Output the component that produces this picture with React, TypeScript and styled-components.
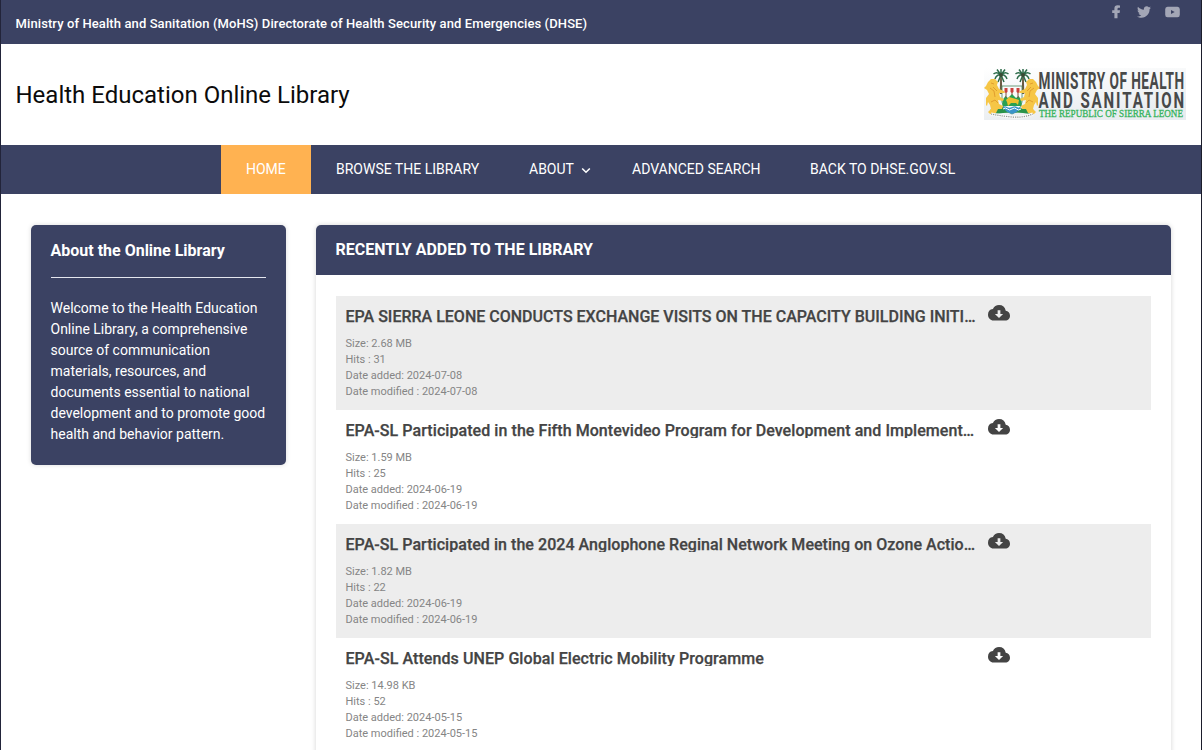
import React from "react";
import styled, { createGlobalStyle } from "styled-components";

const navy = "#3b4263";

const GlobalStyle = createGlobalStyle`
  * { box-sizing: border-box; }
  body { margin: 0; background: #fff; font-family: Roboto, "Liberation Sans", sans-serif; overflow: hidden; }
  h1, h2, h3, p, ul { margin: 0; padding: 0; }
`;

const Page = styled.div`
  height: 750px;
  overflow: hidden;
  border-left: 1px solid #22243a;
  border-right: 1px solid #1b1d2b;
`;

const TopBar = styled.div`
  height: 44px;
  background: ${navy};
  color: #fff;
  display: flex;
  justify-content: space-between;
  padding: 0 21px 0 14.5px;
`;

const TopText = styled.span`
  font-size: 13px;
  font-weight: 500;
  line-height: 47px;
  letter-spacing: 0.1px;
`;

const Socials = styled.div`
  display: flex;
  gap: 14px;
  padding-top: 5px;
  svg { display: block; fill: #a3a6b6; }
`;

const Header = styled.header`
  height: 101px;
  display: flex;
  align-items: center;
  justify-content: space-between;
  padding: 0 15px 1px 14.5px;
`;

const SiteTitle = styled.h1`
  padding-top: 1px;
  font-size: 24px;
  font-weight: 400;
  line-height: 30px;
  color: #0b0b0b;
`;

const Nav = styled.nav`
  height: 49px;
  padding-right: 2px;
  background: ${navy};
  display: flex;
  justify-content: center;
`;

const NavItem = styled.a<{ $active?: boolean; $width: number }>`
  width: ${(p) => p.$width}px;
  padding-left: 25.5px;
  background: ${(p) => (p.$active ? "#ffb251" : "transparent")};
  color: #fff;
  font-size: 14px;
  line-height: 49px;
  white-space: nowrap;
  display: flex;
  align-items: center;
  gap: 7.5px;
`;

const Columns = styled.main`
  display: flex;
  align-items: flex-start;
  gap: 30px;
  padding: 31px 30px 0;
`;

const About = styled.aside`
  width: 255px;
  height: 240px;
  padding: 0 20px;
  border-radius: 5px;
  background: ${navy};
  color: #fff;
  box-shadow: 0 0 5px rgba(0, 0, 0, 0.14);
`;

const AboutTitle = styled.h2`
  font-size: 16px;
  font-weight: 700;
  line-height: 52px;
  height: 53px;
  text-indent: -0.5px;
  border-bottom: 1px solid #e4e6ee;
`;

const AboutText = styled.p`
  padding-top: 20px;
  font-size: 14px;
  line-height: 21px;
  margin: 0 -6px 0 -0.5px;
`;

const Panel = styled.section`
  flex: 1;
  min-width: 0;
  height: 600px;
  border-radius: 5px;
  background: #fff;
  box-shadow: 0 0 5px rgba(0, 0, 0, 0.17);
`;

const PanelTitle = styled.h2`
  height: 50px;
  padding-left: 19.5px;
  border-radius: 5px 5px 0 0;
  background: ${navy};
  color: #fff;
  font-size: 16px;
  font-weight: 700;
  line-height: 49px;
`;

const Entries = styled.ul`
  padding: 21px 20px 0;
  list-style: none;
`;

const Entry = styled.li`
  height: 114px;
  padding: 9px 9.5px 0;
  background: #fff;
  &:nth-child(odd) { background: #ededed; }
`;

const EntryHead = styled.div`
  display: flex;
  gap: 10px;
  height: 31px;
`;

const EntryTitle = styled.h3<{ $tracking: number }>`
  width: 632px;
  height: 18px;
  margin-top: 1px;
  overflow: hidden;
  text-overflow: ellipsis;
  white-space: nowrap;
  color: #444;
  font-size: 16px;
  font-weight: 500;
  line-height: 21px;
  letter-spacing: ${(p) => p.$tracking}px;
  -webkit-text-stroke: 0.25px #444;
`;

const Meta = styled.p`
  color: #858585;
  font-size: 11px;
  line-height: 16px;
`;

const CloudDownload = () => (
  <svg width="22" height="15.500" viewBox="0 0 24 16" preserveAspectRatio="none" fill="#444">
    <path d="M19.35 6.04A7.49 7.49 0 0 0 12 0C9.11 0 6.6 1.64 5.35 4.04A5.994 5.994 0 0 0 0 10c0 3.31 2.69 6 6 6h13c2.76 0 5-2.24 5-5 0-2.64-2.05-4.78-4.65-4.96zM16.500 9.300l-4.500 4.200-4.500-4.200h3V5.500h3v3.800z" />
  </svg>
);

const Palm = ({ x }: { x: number }) => (
  <g transform={`translate(${x} 0)`}>
    <path d="M-.8 8h1.6l.5 18h-2.6z" fill="#6a5a41" />
    <path
      d="M0 7L0 1M0 7L-4 1.500M0 7L4 1.500M0 7Q-4 3-7.500 6M0 7Q4 3 7.500 6M0 7Q-4 6-6 11M0 7Q4 6 6 11M0 7L-3 14M0 7L3 14"
      fill="none"
      stroke="#2c6b49"
      strokeWidth="1.500"
    />
    <circle cy="7" r="2" fill="#3a4a34" />
  </g>
);

const Lion = () => (
  <g>
    <path
      d="M4 14l3-3 4 0 3 3-1 3 2 4 5 2 1 2-6 0 1 4 4 2-1 2-5-1 1 4 4 2-1 3-4 0-2 4-6 1-2-2 3-3-1-4-2-3-1 4-1-1 0-7 3-4-2-4-3-2 2-2z"
      fill="#f6c646"
    />
    <path d="M7 15l3 1M6 20l4 3 1 6M9 19l4 4M7 34l4-2 3 3" fill="none" stroke="#df9a2b" strokeWidth=".9" />
  </g>
);

const MinistryLogo = () => (
  <svg width="202" height="52" viewBox="0 0 202 52" overflow="visible">
    <defs>
      <linearGradient id="logoGround" x1="0" y1="0" x2=".35" y2="1">
        <stop offset="0" stopColor="#fff" />
        <stop offset="1" stopColor="#e9edf0" />
      </linearGradient>
    </defs>
    <rect width="202" height="52" fill="url(#logoGround)" />
    <Palm x={17} />
    <Palm x={39} />
    <path d="M6 42Q14 37 28 39T50 42L46 46Q28 43 10 46z" fill="#299349" />
    <path d="M18 18h20v16q-2 9-10 12q-8-3-10-12z" fill="#fafafa" stroke="#46855a" strokeWidth=".8" />
    <path d="M18.500 32l3-4 2.500 2 4-4 4 4 2.500-2 3 4v6h-19z" fill="#28a052" />
    <path d="M19 39q2-1.500 4 0t5 0 5 0 4 0q-2 5-9 7-7-2-9-7z" fill="#3a94ca" />
    <path d="M19 41q2.500-2 4.500 0t4.500 0 4.500 0 4.500 0" fill="none" stroke="#fff" />
    <path d="M22 23v7M28 23v4M34 23v7" stroke="#78533c" />
    <path d="M20.500 20h3v4l-1.500 1-1.500-1zM26.500 20h3v4l-1.500 1-1.500-1zM32.500 20h3v4l-1.500 1-1.500-1z" fill="#c9403c" />
    <path d="M22 32l3-3 7 2 3 1-1 5-2-2-5 0-3 3-1-4z" fill="#edc02e" />
    <Lion />
    <g transform="translate(56 0) scale(-1 1)"><Lion /></g>
    <path d="M7 46q10 2 21 3t21-3" fill="none" stroke="#f9f9f9" strokeWidth="3" />
    <path d="M7 46q10 2 21 3t21-3" fill="none" stroke="#8b938e" strokeWidth="1.200" strokeDasharray="1.200 1" />
    <g fontFamily="Roboto, sans-serif" fontWeight="700" fill="#474949">
      <text transform="translate(54.500 20.500) scale(.58 1)" fontSize="23.500" textLength="251" lengthAdjust="spacing">MINISTRY OF HEALTH</text>
      <text transform="translate(54.500 39.500) scale(.67 1)" fontSize="22.500" textLength="217.500" lengthAdjust="spacing">AND SANITATION</text>
    </g>
    <text x="55" y="49" fontFamily="Liberation Serif, serif" fontSize="10.500" fill="#35b35c" stroke="#35b35c" strokeWidth=".3" textLength="144" lengthAdjust="spacingAndGlyphs">THE REPUBLIC OF SIERRA LEONE</text>
  </svg>
);

const entries = [
  { title: "EPA SIERRA LEONE CONDUCTS EXCHANGE VISITS ON THE CAPACITY BUILDING INITIATIVE", size: "2.68 MB", hits: 31, date: "2024-07-08", tracking: 0.005 },
  { title: "EPA-SL Participated in the Fifth Montevideo Program for Development and Implementation", size: "1.59 MB", hits: 25, date: "2024-06-19", tracking: 0.065 },
  { title: "EPA-SL Participated in the 2024 Anglophone Reginal Network Meeting on Ozone Action Plans", size: "1.82 MB", hits: 22, date: "2024-06-19", tracking: 0.045 },
  { title: "EPA-SL Attends UNEP Global Electric Mobility Programme", size: "14.98 KB", hits: 52, date: "2024-05-15", tracking: 0.08 },
];

export default function App() {
  return (
    <Page>
      <GlobalStyle />
      <TopBar>
        <TopText>Ministry of Health and Sanitation (MoHS) Directorate of Health Security and Emergencies (DHSE)</TopText>
        <Socials>
          <svg width="14" height="14" viewBox="0 0 14 14">
            <path d="M11 .5v2.300H9.600q-1.100 0-1.100 1.100V5.300h2.500l-.4 2.700H8.500v5.200H5.400V8H3.200V5.300h2.200V3.500Q5.400.3 8.700.3z" />
          </svg>
          <svg width="14" height="14" viewBox="0 0 512 512">
            <path d="M459.400 151.700c.3 4.500.3 9.100.3 13.600 0 138.700-105.600 298.600-298.600 298.600-59.500 0-114.700-17.200-161.100-47.100 8.400 1 16.600 1.300 25.300 1.300 49.100 0 94.200-16.600 130.300-44.800-46.100-1-84.800-31.200-98.100-72.800 6.500 1 13 1.600 19.800 1.600 9.400 0 18.800-1.300 27.600-3.600-48.100-9.700-84.100-52-84.100-103v-1.300c14 7.800 30.200 12.700 47.400 13.300-28.300-18.800-46.800-51-46.800-87.400 0-19.500 5.200-37.400 14.300-53 51.700 63.700 129.300 105.300 216.400 109.800-1.600-7.800-2.600-15.900-2.600-24 0-57.800 46.800-104.900 104.900-104.900 30.200 0 57.500 12.700 76.700 33.100 23.700-4.500 46.500-13.300 66.600-25.300-7.800 24.400-24.400 44.800-46.100 57.800 21.100-2.300 41.600-8.100 60.400-16.200-14.300 20.800-32.200 39.300-52.600 54.300z" />
          </svg>
          <svg width="15" height="14" viewBox="0 0 15 14">
            <path fillRule="evenodd" d="M2.500 1.700h10q2.300 0 2.300 2.500v5.600q0 2.500-2.300 2.500h-10Q.2 12.300.2 9.800V4.200q0-2.500 2.300-2.500zM6 4.900v4.200L9.700 7z" />
          </svg>
        </Socials>
      </TopBar>
      <Header>
        <SiteTitle>Health Education Online Library</SiteTitle>
        <MinistryLogo />
      </Header>
      <Nav>
        <NavItem $active $width={90}>HOME</NavItem>
        <NavItem $width={193}>BROWSE THE LIBRARY</NavItem>
        <NavItem $width={103}>
          ABOUT
          <svg width="10" height="8" viewBox="0 0 10 8" fill="none" stroke="#fff" strokeWidth="1.600">
            <path d="M1.200 2.500L5 6.200l3.800-3.700" />
          </svg>
        </NavItem>
        <NavItem $width={178}>ADVANCED SEARCH</NavItem>
        <NavItem $width={195}>BACK TO DHSE.GOV.SL</NavItem>
      </Nav>
      <Columns>
        <About>
          <AboutTitle>About the Online Library</AboutTitle>
          <AboutText>
            Welcome to the Health Education Online Library, a comprehensive source of communication materials, resources, and documents essential to national development and to promote good health and behavior pattern.
          </AboutText>
        </About>
        <Panel>
          <PanelTitle>RECENTLY ADDED TO THE LIBRARY</PanelTitle>
          <Entries>
            {entries.map((entry) => (
              <Entry key={entry.title}>
                <EntryHead>
                  <EntryTitle $tracking={entry.tracking}>{entry.title}</EntryTitle>
                  <CloudDownload />
                </EntryHead>
                <Meta>Size: {entry.size}</Meta>
                <Meta>Hits : {entry.hits}</Meta>
                <Meta>Date added: {entry.date}</Meta>
                <Meta>Date modified : {entry.date}</Meta>
              </Entry>
            ))}
          </Entries>
        </Panel>
      </Columns>
    </Page>
  );
}
